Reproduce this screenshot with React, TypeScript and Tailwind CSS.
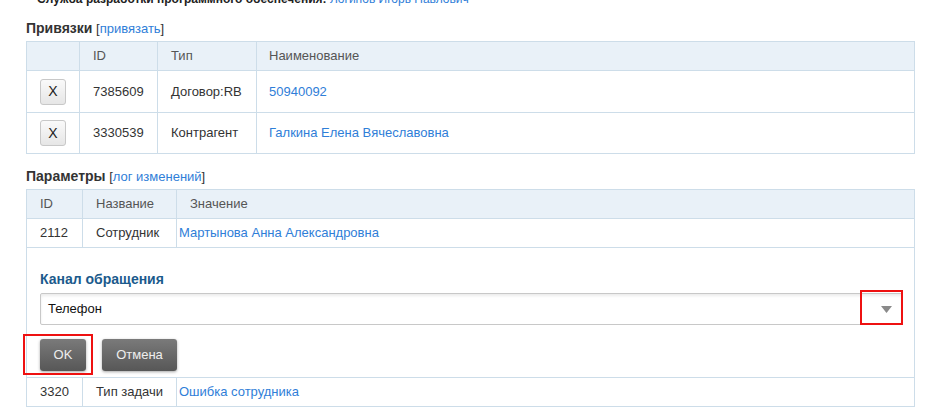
import React from "react";

const font = { fontFamily: '"Liberation Sans", Arial, sans-serif' };

export default function App() {
  return (
    <div className="w-[927px] h-[409px] overflow-hidden bg-white text-[13px] text-[#333]" style={font}>
      <div className="relative h-[409px]">
        {/* cut-off top line */}
        <div className="mt-[-11px] h-[20px] leading-[20px] pl-[37px] text-[12px] whitespace-nowrap">
          <span className="font-bold text-[#222]">Служба разработки программного обеспечения:</span>{" "}
          <span className="text-[#2f7ed8]">Логинов Игорь Павлович</span>
        </div>

        {/* Привязки */}
        <div className="pl-[26px] mt-[9px] h-[20px] leading-[20px]">
          <span className="font-bold text-[14px] text-[#333]">Привязки</span>{" "}
          <span className="text-[13px]">[<span className="text-[#2f7ed8]">привязать</span>]</span>
        </div>

        <div className="pl-[26px] mt-[3px]">
          <table className="border-collapse w-[889px] table-fixed">
            <colgroup>
              <col className="w-[53px]" />
              <col className="w-[78px]" />
              <col className="w-[99px]" />
              <col />
            </colgroup>
            <thead>
              <tr className="h-[29px] bg-[#e9f1f8] text-[#555]">
                <th className="border border-[#cddde9] font-normal text-left"></th>
                <th className="border border-[#cddde9] font-normal text-left pl-[13px]">ID</th>
                <th className="border border-[#cddde9] font-normal text-left pl-[13px]">Тип</th>
                <th className="border border-[#cddde9] font-normal text-left pl-[12px]">Наименование</th>
              </tr>
            </thead>
            <tbody>
              {[
                ["7385609", "Договор:RB", "50940092"],
                ["3330539", "Контрагент", "Галкина Елена Вячеславовна"],
              ].map((r, i) => (
                <tr key={i} className={i === 0 ? "h-[42px]" : "h-[41px]"}>
                  <td className="border border-[#cddde9] pl-[13px]">
                    <div className="w-[26px] h-[26px] rounded-[3px] border border-[#c8c8c8] bg-gradient-to-b from-[#fafafa] to-[#e6e6e6] flex items-center justify-center text-[14px] text-[#222]">
                      X
                    </div>
                  </td>
                  <td className="border border-[#cddde9] pl-[13px]">{r[0]}</td>
                  <td className="border border-[#cddde9] pl-[13px]">{r[1]}</td>
                  <td className="border border-[#cddde9] pl-[12px] text-[#2f7ed8]">{r[2]}</td>
                </tr>
              ))}
            </tbody>
          </table>
        </div>

        {/* Параметры */}
        <div className="pl-[26px] mt-[12px] h-[20px] leading-[20px]">
          <span className="font-bold text-[14px] text-[#333]">Параметры</span>{" "}
          <span className="text-[13px]">[<span className="text-[#2f7ed8]">лог изменений</span>]</span>
        </div>

        <div className="pl-[26px] mt-[3px]">
          <table className="border-collapse w-[889px] table-fixed">
            <colgroup>
              <col className="w-[56px]" />
              <col className="w-[94px]" />
              <col />
            </colgroup>
            <thead>
              <tr className="h-[29px] bg-[#e9f1f8] text-[#555]">
                <th className="border border-[#cddde9] font-normal text-left pl-[13px]">ID</th>
                <th className="border border-[#cddde9] font-normal text-left pl-[13px]">Название</th>
                <th className="border border-[#cddde9] font-normal text-left pl-[13px]">Значение</th>
              </tr>
            </thead>
            <tbody>
              <tr className="h-[29px]">
                <td className="border border-[#cddde9] pl-[13px]">2112</td>
                <td className="border border-[#cddde9] pl-[13px]">Сотрудник</td>
                <td className="border border-[#cddde9] pl-[2px] text-[#2f7ed8]">Мартынова Анна Александровна</td>
              </tr>
              <tr className="h-[130px]">
                <td colSpan={3} className="border border-[#cddde9] px-[13px] pt-[21px] pb-[6px] align-top">
                  <div className="font-bold text-[14px] text-[#1b5a8c] leading-[20px]">Канал обращения</div>
                  <div className="relative mt-[4px] w-[863px]">
                    <div className="h-[32px] rounded-[2px] border border-[#c8c8c8] shadow-[inset_0_2px_3px_rgba(0,0,0,0.08)] bg-white flex items-center pl-[7px] text-[13px] text-[#111]">
                      Телефон
                    </div>
                    <svg className="absolute right-[11px] top-[13px]" width="11" height="7" viewBox="0 0 11 7">
                      <polygon points="0,0 11,0 5.5,7" fill="#8a8a8a" />
                    </svg>
                    <div className="absolute right-0 top-[-3px] w-[43px] h-[35px] border-2 border-[#ee1111]" />
                  </div>
                  <div className="relative flex gap-[16px] mt-[14px]">
                    <div className="w-[46px] h-[32px] rounded-[3px] bg-gradient-to-b from-[#7a7a7a] to-[#575757] shadow-[0_1px_3px_rgba(0,0,0,0.35)] flex items-center justify-center text-[#eee] text-[13px]">
                      OK
                    </div>
                    <div className="w-[75px] h-[32px] rounded-[3px] bg-gradient-to-b from-[#7a7a7a] to-[#575757] shadow-[0_1px_3px_rgba(0,0,0,0.35)] flex items-center justify-center text-[#eee] text-[13px]">
                      Отмена
                    </div>
                    <div className="absolute left-[-17px] top-[-5px] w-[70px] h-[41px] border-2 border-[#ee1111]" />
                  </div>
                </td>
              </tr>
              <tr className="h-[29px]">
                <td className="border border-[#cddde9] pl-[13px]">3320</td>
                <td className="border border-[#cddde9] pl-[13px]">Тип задачи</td>
                <td className="border border-[#cddde9] pl-[2px] text-[#2f7ed8]">Ошибка сотрудника</td>
              </tr>
            </tbody>
          </table>
        </div>
      </div>
    </div>
  );
}
